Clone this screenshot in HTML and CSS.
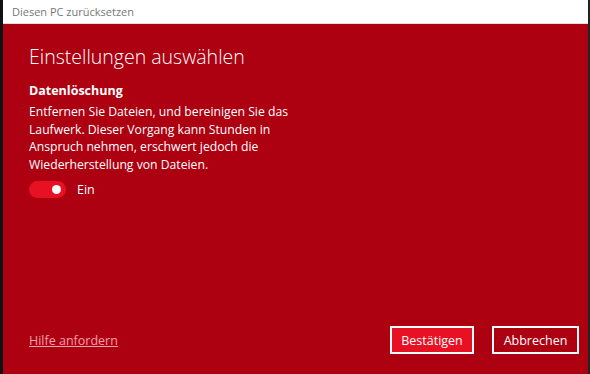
FILE: index.html
```html
<!DOCTYPE html>
<html>
<head>
    <title>Diesen PC zurücksetzen</title>
    <meta charset="UTF-8">
    <link rel="stylesheet" href="styles.css">
</head>
<body>
<div class="window">
    <div class="titlebar">Diesen PC zurücksetzen</div>
    <div class="content">
        <h1>Einstellungen auswählen</h1>
        <h2>Datenlöschung</h2>
        <p>Entfernen Sie Dateien, und bereinigen Sie das Laufwerk. Dieser Vorgang kann Stunden in Anspruch nehmen, erschwert jedoch die Wiederherstellung von Dateien.</p>
        <div class="toggle-row">
            <span class="toggle"><span class="knob"></span></span>
            <span class="toggle-label">Ein</span>
        </div>
        <div class="footer">
            <a class="help" href="#">Hilfe anfordern</a>
            <div class="buttons">
                <button class="btn primary">Bestätigen</button>
                <button class="btn">Abbrechen</button>
            </div>
        </div>
    </div>
</div>
</body>
</html>
```

FILE: styles.css
```css
body {
    margin: 0;
    width: 590px;
    height: 374px;
    overflow: hidden;
    background-color: #111;
    font-family: "Open Sans", Arial, sans-serif;
}

.window {
    margin-left: 3px;
    width: 585px;
    height: 374px;
    display: flex;
    flex-direction: column;
    border-right: 2px solid #222;
}

.titlebar {
    height: 23px;
    background-color: white;
    border-bottom: 1px solid #ddd;
    color: #777;
    font-size: 11px;
    line-height: 23px;
    padding-left: 9px;
}

.content {
    flex: 1;
    background-color: #ad0011;
    color: white;
    padding: 0 9px 0 26px;
    display: flex;
    flex-direction: column;
}

h1 {
    font-weight: 300;
    font-size: 19.5px;
    margin: 19px 0 0 0;
    line-height: 28px;
}

h2 {
    font-size: 12.5px;
    font-weight: 700;
    margin: 11px 0 0 0;
    line-height: 18px;
}

p {
    font-size: 12.2px;
    line-height: 17.5px;
    margin: 3px 0 0 0;
    width: 280px;
}

.toggle-row {
    display: flex;
    align-items: center;
    margin-top: 8px;
}

.toggle {
    width: 37px;
    height: 17px;
    border-radius: 9px;
    background-color: #e81123;
    position: relative;
}

.knob {
    position: absolute;
    right: 5px;
    top: 4px;
    width: 9px;
    height: 9px;
    border-radius: 50%;
    background-color: white;
}

.toggle-label {
    font-size: 12.5px;
    margin-left: 11px;
}

.footer {
    margin-top: auto;
    margin-bottom: 20px;
    display: flex;
    align-items: center;
    justify-content: space-between;
}

.help {
    color: #f0a2ab;
    font-size: 12.5px;
}

.buttons {
    display: flex;
    gap: 18px;
}

.btn {
    font-family: inherit;
    font-size: 12.5px;
    color: white;
    background-color: #ad0011;
    border: 2px solid white;
    height: 28px;
    width: 87px;
    padding: 0;
}

.btn.primary {
    background-color: #e81123;
    width: 84px;
}
```
